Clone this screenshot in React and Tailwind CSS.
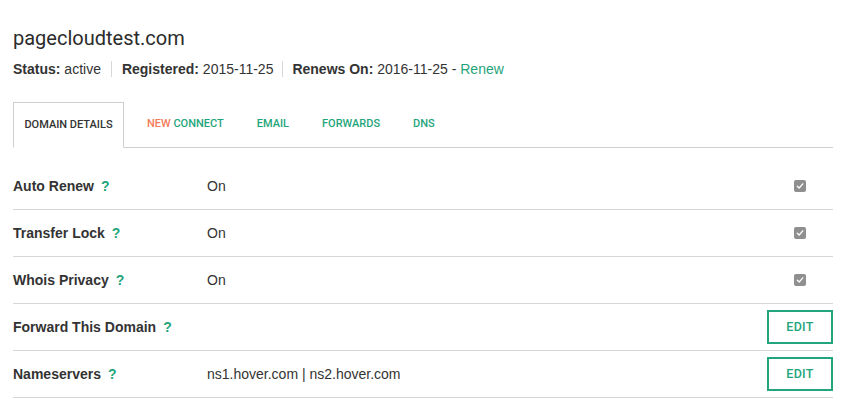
import React from 'react';

const GREEN = 'text-[#1fa57b]';

function Help() {
  return <span className={`ml-[7px] font-bold ${GREEN}`}>?</span>;
}

function Check() {
  return (
    <span className="flex h-[12px] w-[12px] items-center justify-center rounded-[2px] bg-[#8f8f8f]">
      <svg width="8" height="8" viewBox="0 0 8 8" fill="none">
        <path d="M1.3 4.2 L3.2 6 L6.8 1.8" stroke="#fff" strokeWidth="1.3" strokeLinecap="round" strokeLinejoin="round" />
      </svg>
    </span>
  );
}

function EditButton() {
  return (
    <button className="h-[34px] w-[66px] border-2 border-[#22a57c] text-[12.5px] font-medium tracking-wide text-[#22a57c] [font-family:Roboto,sans-serif]">
      EDIT
    </button>
  );
}

const rows = [
  { label: 'Auto Renew', value: 'On', action: 'check' },
  { label: 'Transfer Lock', value: 'On', action: 'check' },
  { label: 'Whois Privacy', value: 'On', action: 'check' },
  { label: 'Forward This Domain', value: '', action: 'edit' },
  { label: 'Nameservers', value: 'ns1.hover.com | ns2.hover.com', action: 'edit' },
];

export default function App() {
  return (
    <div className="min-h-[402px] w-[845px] bg-white text-[#333] [font-family:'Liberation_Sans',Arial,sans-serif]">
      <div className="px-[13px] pr-[12px] pt-[24px]">
        {/* Header */}
        <h1 className="text-[20px] leading-[28px] text-[#2b2b2b] [font-family:Roboto,sans-serif]">pagecloudtest.com</h1>
        <div className="mt-[7px] flex items-center text-[14px] leading-[20px]">
          <span><b>Status:</b> active</span>
          <span className="mx-[10px] h-[16px] w-px bg-[#d8d8d8]" />
          <span><b>Registered:</b> 2015-11-25</span>
          <span className="mx-[9px] h-[16px] w-px bg-[#d8d8d8]" />
          <span>
            <b>Renews On:</b> 2016-11-25 - <span className={GREEN}>Renew</span>
          </span>
        </div>

        {/* Tabs */}
        <div className="mt-[23px] flex items-end border-b border-[#cfcfcf] text-[11px] font-medium uppercase [font-family:Roboto,sans-serif]">
          <div className="-mb-px flex h-[46px] w-[111px] items-center justify-center border border-b-white border-[#cfcfcf] bg-white text-[#333]">
            Domain Details
          </div>
          <div className={`ml-[23px] flex h-[45px] items-center gap-[33px] ${GREEN}`}>
            <span><span className="text-[#f47b5a]">New</span> Connect</span>
            <span>Email</span>
            <span>Forwards</span>
            <span>DNS</span>
          </div>
        </div>

        {/* Rows */}
        <div className="mt-[15px]">
          {rows.map((r) => (
            <div key={r.label} className="flex h-[47px] items-center border-b border-[#d6d6d6] text-[14px]">
              <div className="w-[194px] font-bold">
                {r.label}
                <Help />
              </div>
              <div className="flex-1">{r.value}</div>
              {r.action === 'check' ? (
                <div className="mr-[27px]"><Check /></div>
              ) : (
                <EditButton />
              )}
            </div>
          ))}
        </div>
      </div>
    </div>
  );
}
